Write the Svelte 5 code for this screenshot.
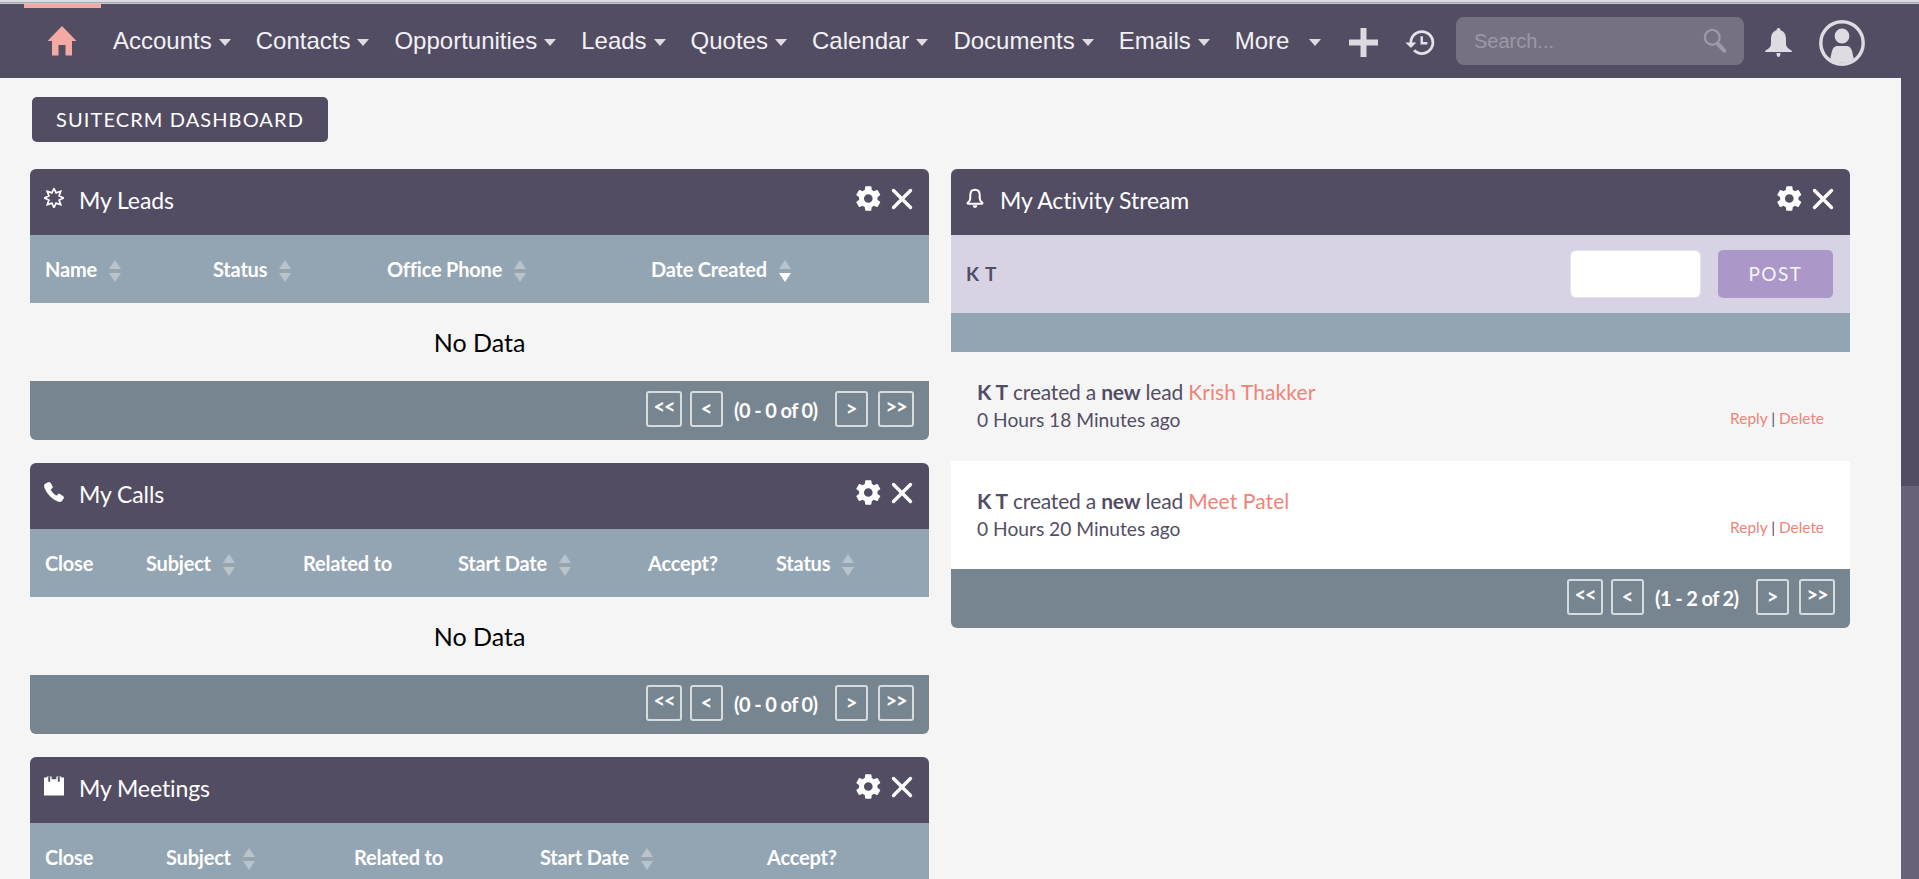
<script>
  const menu = ['Accounts', 'Contacts', 'Opportunities', 'Leads', 'Quotes', 'Calendar', 'Documents', 'Emails'];

  const panels = [
    {
      title: 'My Leads', icon: 'star', showBody: true,
      cols: [
        { label: 'Name', width: 168, sort: true },
        { label: 'Status', width: 174, sort: true },
        { label: 'Office Phone', width: 264, sort: true },
        { label: 'Date Created', width: 293, sort: true, active: true },
      ],
    },
    {
      title: 'My Calls', icon: 'phone', showBody: true,
      cols: [
        { label: 'Close', width: 101 },
        { label: 'Subject', width: 157, sort: true },
        { label: 'Related to', width: 155 },
        { label: 'Start Date', width: 190, sort: true },
        { label: 'Accept?', width: 128 },
        { label: 'Status', width: 168, sort: true },
      ],
    },
    {
      title: 'My Meetings', icon: 'calendar', showBody: false,
      cols: [
        { label: 'Close', width: 121 },
        { label: 'Subject', width: 188, sort: true },
        { label: 'Related to', width: 186 },
        { label: 'Start Date', width: 227, sort: true },
        { label: 'Accept?', width: 177 },
      ],
    },
  ];

  const activity = [
    { name: 'Krish Thakker', time: '0 Hours 18 Minutes ago' },
    { name: 'Meet Patel', time: '0 Hours 20 Minutes ago' },
  ];
</script>

{#snippet panelTools()}
  <div class="tools">
    <svg class="gear" viewBox="0 0 24 24" fill="#fff">
      <path d="M19.4 13c.04-.33.06-.66.06-1s-.02-.67-.07-1l2.15-1.68c.2-.15.25-.42.13-.65l-2.04-3.53c-.12-.22-.39-.3-.62-.22l-2.54 1.02c-.53-.4-1.1-.74-1.72-1l-.38-2.7A.5.5 0 0 0 13.87 1.8H9.8c-.25 0-.46.18-.5.42l-.38 2.7c-.62.26-1.2.6-1.72 1L4.66 4.9c-.23-.08-.5 0-.62.22L2 8.65c-.13.22-.07.5.12.65L4.27 11c-.05.33-.08.67-.08 1s.03.67.07 1l-2.15 1.68c-.2.15-.25.42-.13.65l2.04 3.53c.12.22.39.3.62.22l2.54-1.02c.53.4 1.1.74 1.72 1l.38 2.7c.04.24.25.42.5.42h4.07c.25 0 .46-.18.5-.42l.38-2.7c.62-.26 1.2-.6 1.72-1l2.54 1.02c.23.08.5 0 .62-.22l2.04-3.53c.12-.22.07-.5-.13-.65L19.4 13zM11.83 15.6a3.6 3.6 0 1 1 0-7.2 3.6 3.6 0 0 1 0 7.2z"/>
    </svg>
    <svg class="close" viewBox="0 0 22 22" stroke="#fff" stroke-width="3.4" stroke-linecap="round">
      <path d="M2.5 2.5l17 17M19.5 2.5l-17 17"/>
    </svg>
  </div>
{/snippet}

{#snippet pager(text)}
  <div class="pager">
    <button class="wide">&lt;&lt;</button>
    <button>&lt;</button>
    <span class="count">{text}</span>
    <button>&gt;</button>
    <button class="wide last">&gt;&gt;</button>
  </div>
{/snippet}

<div class="shell">
  <div class="browser-line"></div>

  <nav class="topnav">
    <a class="home" href="#home" aria-label="Home">
      <svg viewBox="0 0 30 32" width="30" height="32" fill="#f4a9a2">
        <path d="M15 1 29.5 16H25v14.5h-6.5V20h-7v10.500H5V16H.5z"/>
      </svg>
    </a>
    <ul class="menu">
      {#each menu as item}
        <li>{item}<span class="caret"></span></li>
      {/each}
      <li class="more">More<span class="caret"></span></li>
    </ul>
    <svg class="plus" viewBox="0 0 29 29" fill="#dcd9e0"><path d="M11.500 0h6v11.500H29v6H17.500V29h-6V17.500H0v-6h11.500z"/></svg>
    <svg class="history" viewBox="0 0 24 24" fill="#e4e2e8">
      <path d="M13 3a9 9 0 0 0-9 9H1l3.890 3.890.07.14L9 12H6c0-3.870 3.130-7 7-7s7 3.130 7 7-3.130 7-7 7c-1.930 0-3.680-.79-4.940-2.060l-1.420 1.420A8.954 8.954 0 0 0 13 21a9 9 0 0 0 0-18zm-1 4.500v6h5v-1.800h-3.200V7.500H12z"/>
    </svg>
    <div class="search">
      <span>Search...</span>
      <svg viewBox="0 0 26 28" width="24" height="26" fill="none" stroke="#9c98a8">
        <circle cx="10" cy="10" r="8" stroke-width="2.500"/>
        <path d="M16 17l7 7.500" stroke-width="4.500" stroke-linecap="round"/>
      </svg>
    </div>
    <svg class="bell" viewBox="0 0 27 29" fill="#dedbe2">
      <path d="M13.500 0c1.200 0 1.900.9 1.900 2.200C19.500 3.200 21 7 21 11v5c0 3 2.500 5 5.500 6.500.7.4.5 1.500-.4 1.500H.9c-.9 0-1.100-1.100-.4-1.500C3.500 21 6 19 6 16v-5c0-4 1.500-7.800 5.600-8.800C11.600.9 12.300 0 13.500 0zM11.500 25h4c0 2.500-.8 4-2 4s-2-1.500-2-4z"/>
    </svg>
    <svg class="avatar" viewBox="0 0 46 46">
      <circle cx="23" cy="23" r="21.200" fill="none" stroke="#dedbe2" stroke-width="3.400"/>
      <circle cx="23" cy="16" r="7.400" fill="#dedbe2"/>
      <path d="M19 26h8c4 0 5.500 2.500 6.500 7l1.300 6a20 20 0 0 1-23.600 0l1.300-6c1-4.500 2.500-7 6.500-7z" fill="#dedbe2"/>
    </svg>
  </nav>

  <div class="below">
    <main class="page">
      <button class="tab">SUITECRM DASHBOARD</button>

      <div class="columns">
        <div class="column">
          {#each panels as panel}
            <section class="panel">
              <header class="panel-head">
                {#if panel.icon === 'star'}
                  <svg class="panel-icon" viewBox="0 0 20 20" fill="none" stroke="#fff" stroke-width="1.700" stroke-miterlimit="8">
                    <path d="M10 .5 12.100 4.900 16.700 3.300 15.100 7.900 19.500 10 15.100 12.100 16.700 16.700 12.100 15.100 10 19.500 7.900 15.100 3.300 16.700 4.900 12.100.5 10 4.900 7.900 3.300 3.300 7.900 4.900z"/>
                  </svg>
                {:else if panel.icon === 'phone'}
                  <svg class="panel-icon" viewBox="0 0 20 20" fill="#fff" stroke="#fff" stroke-width="0.700">
                    <path d="M4.600.3 1.400 2C.4 2.600.2 3.500.5 4.700 2.500 11.300 8 17 14.900 19.600c1 .4 2 .2 2.700-.7l1.900-2.700c.4-.6.300-1.200-.3-1.600l-3.500-2.400c-.6-.4-1.100-.3-1.600.2l-1.500 1.500C9.800 12.800 7.500 10.300 6.400 7.600L8 6.200c.5-.5.600-1 .3-1.600L6.200.8C5.800.2 5.300 0 4.600.3z"/>
                  </svg>
                {:else}
                  <svg class="panel-icon" viewBox="0 0 21 20" fill="#fff">
                    <path d="M0 1h3V0h5v3h5V0h5v1h3v19H0z"/>
                    <path d="M4.500 0h2v5.500h-2zM14.500 0h2v5.500h-2z" fill="#534d64"/>
                  </svg>
                {/if}
                <h3>{panel.title}</h3>
                {@render panelTools()}
              </header>
              <div class="thead">
                {#each panel.cols as col}
                  <div class="th" style="width: {col.width}px">
                    {col.label}
                    {#if col.sort}
                      <span class="sort" class:active={col.active}><i class="up"></i><i class="down"></i></span>
                    {/if}
                  </div>
                {/each}
              </div>
              {#if panel.showBody}
                <div class="no-data">No Data</div>
                <footer class="panel-foot">{@render pager('(0 - 0 of 0)')}</footer>
              {/if}
            </section>
          {/each}
        </div>

        <div class="column">
          <section class="panel">
            <header class="panel-head">
              <svg class="panel-icon bell-outline" viewBox="0 0 20 22" fill="none" stroke="#fff" stroke-width="2.200">
                <path d="M10 2c-3.500 0-5.200 2.700-5.200 6v3.500c0 2-1.300 3.500-2.800 4.700-.4.400-.2 1 .4 1h15.200c.6 0 .8-.6.400-1-1.500-1.200-2.800-2.700-2.800-4.700V8c0-3.300-1.700-6-5.200-6z"/>
                <path d="M7.500 19h5c0 1.800-1 2.800-2.500 2.800S7.500 20.800 7.500 19z" fill="#fff" stroke="none"/>
              </svg>
              <h3>My Activity Stream</h3>
              {@render panelTools()}
            </header>
            <div class="post-row">
              <span class="poster">K T</span>
              <input type="text" />
              <button class="post">POST</button>
            </div>
            <div class="band"></div>
            {#each activity as entry, i}
              <article class="entry" class:white={i === 1}>
                <div>
                  <p class="line"><b>K T</b> created a <b>new</b> lead <a href="#lead">{entry.name}</a></p>
                  <p class="time">{entry.time}</p>
                </div>
                <div class="actions"><a href="#reply">Reply</a> | <a href="#delete">Delete</a></div>
              </article>
            {/each}
            <footer class="panel-foot">{@render pager('(1 - 2 of 2)')}</footer>
          </section>
        </div>
      </div>
    </main>

    <div class="scrollbar"><div class="thumb"></div></div>
  </div>
</div>

<style>
  :global(body) {
    margin: 0;
    background: #f5f5f5;
    overflow: hidden;
  }

  .shell {
    height: 879px;
    display: flex;
    flex-direction: column;
    overflow: hidden;
    font-family: Lato, sans-serif;
    color: #534d64;
  }

  .browser-line {
    height: 4px;
    flex: none;
    background: linear-gradient(#dcdce0 0 2px, #a9a9b4 2px 3px, #c8c8d0 3px);
  }

  .topnav {
    height: 74px;
    flex: none;
    display: flex;
    align-items: center;
    background: #534d64;
    font-family: "Liberation Sans", Arial, sans-serif;
  }

  .home {
    width: 77px;
    margin-left: 24px;
    height: 74px;
    display: flex;
    justify-content: center;
    align-items: center;
    box-sizing: border-box;
    border-top: 4px solid #f4a9a2;
    padding: 0 2px 4px 0;
  }

  .menu {
    list-style: none;
    margin: 0 0 0 12px;
    padding: 0;
    display: flex;
    gap: 25px;
    color: #f2f1f4;
    font-size: 24px;
    width: 1238px;
    flex: none;
  }

  .menu li {
    display: flex;
    align-items: center;
    white-space: nowrap;
  }

  .caret {
    width: 0;
    height: 0;
    margin: 3px 0 0 7px;
    border-left: 6.500px solid transparent;
    border-right: 6.500px solid transparent;
    border-top: 7px solid #dedbe2;
  }

  .more .caret {
    margin-left: 20px;
  }

  .plus {
    width: 29px;
    height: 29px;
    flex: none;
    margin: 3px 26px 0 -2px;
  }

  .history {
    width: 33px;
    height: 33px;
    flex: none;
    margin: 2px 19px 0 0;
  }

  .search {
    width: 288px;
    height: 48px;
    flex: none;
    box-sizing: border-box;
    padding: 0 17px 0 18px;
    display: flex;
    align-items: center;
    justify-content: space-between;
    border-radius: 8px;
    background: #767182;
    color: #9c98a8;
    font-size: 20px;
  }

  .bell {
    width: 27px;
    height: 29px;
    flex: none;
    margin: 3px 0 0 21px;
  }

  .avatar {
    width: 46px;
    height: 46px;
    flex: none;
    margin: 4px 0 0 27px;
  }

  .below {
    flex: 1;
    min-height: 0;
    display: flex;
  }

  .page {
    flex: 1;
    min-width: 0;
    padding: 19px 0 0 30px;
    box-sizing: border-box;
  }

  .tab {
    margin-left: 2px;
    width: 296px;
    height: 45px;
    padding: 0 0 2px;
    border: 0;
    border-radius: 5px;
    background: #534d64;
    color: #fff;
    font-family: Lato, sans-serif;
    font-size: 20px;
    letter-spacing: 1.100px;
    display: block;
  }

  .columns {
    display: flex;
    gap: 22px;
    margin-top: 27px;
  }

  .column {
    width: 899px;
    flex: none;
    display: flex;
    flex-direction: column;
    gap: 23px;
  }

  .panel-head {
    height: 66px;
    box-sizing: border-box;
    display: flex;
    align-items: center;
    padding: 0 15px 5px 14px;
    background: #534d64;
    border-radius: 6px 6px 0 0;
    color: #fff;
  }

  .panel-icon {
    width: 20px;
    height: 20px;
    flex: none;
    margin-bottom: 3px;
  }

  .panel-head h3 {
    margin: 0 0 0 15px;
    font-size: 23px;
    font-weight: 400;
    letter-spacing: -0.1px;
  }

  .tools {
    margin-left: auto;
    display: flex;
    align-items: center;
    gap: 8px;
    margin-bottom: 1px;
    padding-right: 1px;
  }

  .gear {
    width: 29px;
    height: 29px;
    margin-bottom: 2px;
  }

  .close {
    width: 22px;
    height: 22px;
  }

  .thead {
    height: 68px;
    display: flex;
    background: #93a4b3;
    color: #fff;
  }

  .th {
    display: flex;
    align-items: center;
    box-sizing: border-box;
    padding-left: 15px;
    flex: none;
    font-size: 20px;
    font-weight: 700;
    letter-spacing: -0.2px;
    white-space: nowrap;
  }

  .sort {
    display: inline-flex;
    flex-direction: column;
    gap: 4px;
    margin-left: 12px;
    margin-top: 3px;
  }

  .sort i {
    width: 0;
    height: 0;
    border-left: 6.500px solid transparent;
    border-right: 6.500px solid transparent;
  }

  .sort .up {
    border-bottom: 9px solid #b9c3cc;
  }

  .sort .down {
    border-top: 9px solid #b9c3cc;
  }

  .sort.active .down {
    border-top-color: #fff;
  }

  .no-data {
    height: 78px;
    display: flex;
    align-items: center;
    justify-content: center;
    font-size: 25px;
    color: #000;
  }

  .panel-foot {
    height: 59px;
    box-sizing: border-box;
    display: flex;
    justify-content: flex-end;
    padding: 10px 15px 0 0;
    background: #778591;
    border-radius: 0 0 6px 6px;
  }

  .pager {
    display: flex;
    height: 36px;
    gap: 8px;
    color: #fff;
    font-family: Lato, sans-serif;
  }

  .pager button {
    width: 33px;
    height: 36px;
    padding: 0 0 3px;
    border: 2px solid rgba(255, 255, 255, 0.7);
    border-radius: 3px;
    background: transparent;
    color: #fff;
    font-family: Lato, sans-serif;
    font-size: 20px;
    font-weight: 700;
  }

  .pager button.wide {
    width: 36px;
    padding-bottom: 6px;
    letter-spacing: -1px;
  }

  .pager button.last {
    margin-left: 2px;
  }

  .count {
    margin-left: 3px;
    font-size: 20px;
    font-weight: 700;
    letter-spacing: -0.6px;
    line-height: 38px;
    white-space: nowrap;
    width: 93px;
  }

  .post-row {
    height: 78px;
    box-sizing: border-box;
    display: flex;
    align-items: center;
    padding: 0 17px 0 15px;
    background: #d8d3e4;
  }

  .poster {
    font-size: 19px;
    font-weight: 700;
    letter-spacing: 1px;
    margin: 0 auto 2px 0;
  }

  .post-row input {
    width: 131px;
    height: 48px;
    box-sizing: border-box;
    margin: 0 17px 1px 0;
    border: 1px solid #e4e2ea;
    border-radius: 6px;
    background: #fff;
  }

  .post {
    width: 115px;
    height: 48px;
    padding: 0 0 1px;
    border: 0;
    border-radius: 5px;
    background: #ab98c9;
    color: #f5f5f5;
    font-family: Lato, sans-serif;
    font-size: 19px;
    letter-spacing: 1.500px;
  }

  .band {
    height: 39px;
    background: #93a4b3;
  }

  .entry {
    height: 108.500px;
    box-sizing: border-box;
    display: flex;
    justify-content: space-between;
    align-items: flex-start;
    padding: 25px 26px 0;
  }

  .entry.white {
    background: #fff;
  }

  .entry p {
    margin: 0;
  }

  .line {
    font-size: 21px;
    line-height: 29px;
    letter-spacing: -0.2px;
  }

  .line a {
    letter-spacing: 0.1px;
  }

  .time {
    font-size: 19.200px;
    line-height: 28px;
  }

  .entry a {
    color: #f08377;
    text-decoration: none;
  }

  .actions {
    font-size: 15.400px;
    margin-top: 32px;
  }

  .scrollbar {
    width: 18px;
    flex: none;
    background: #676278;
  }

  .thumb {
    height: 408px;
    background: #534d64;
  }
</style>
